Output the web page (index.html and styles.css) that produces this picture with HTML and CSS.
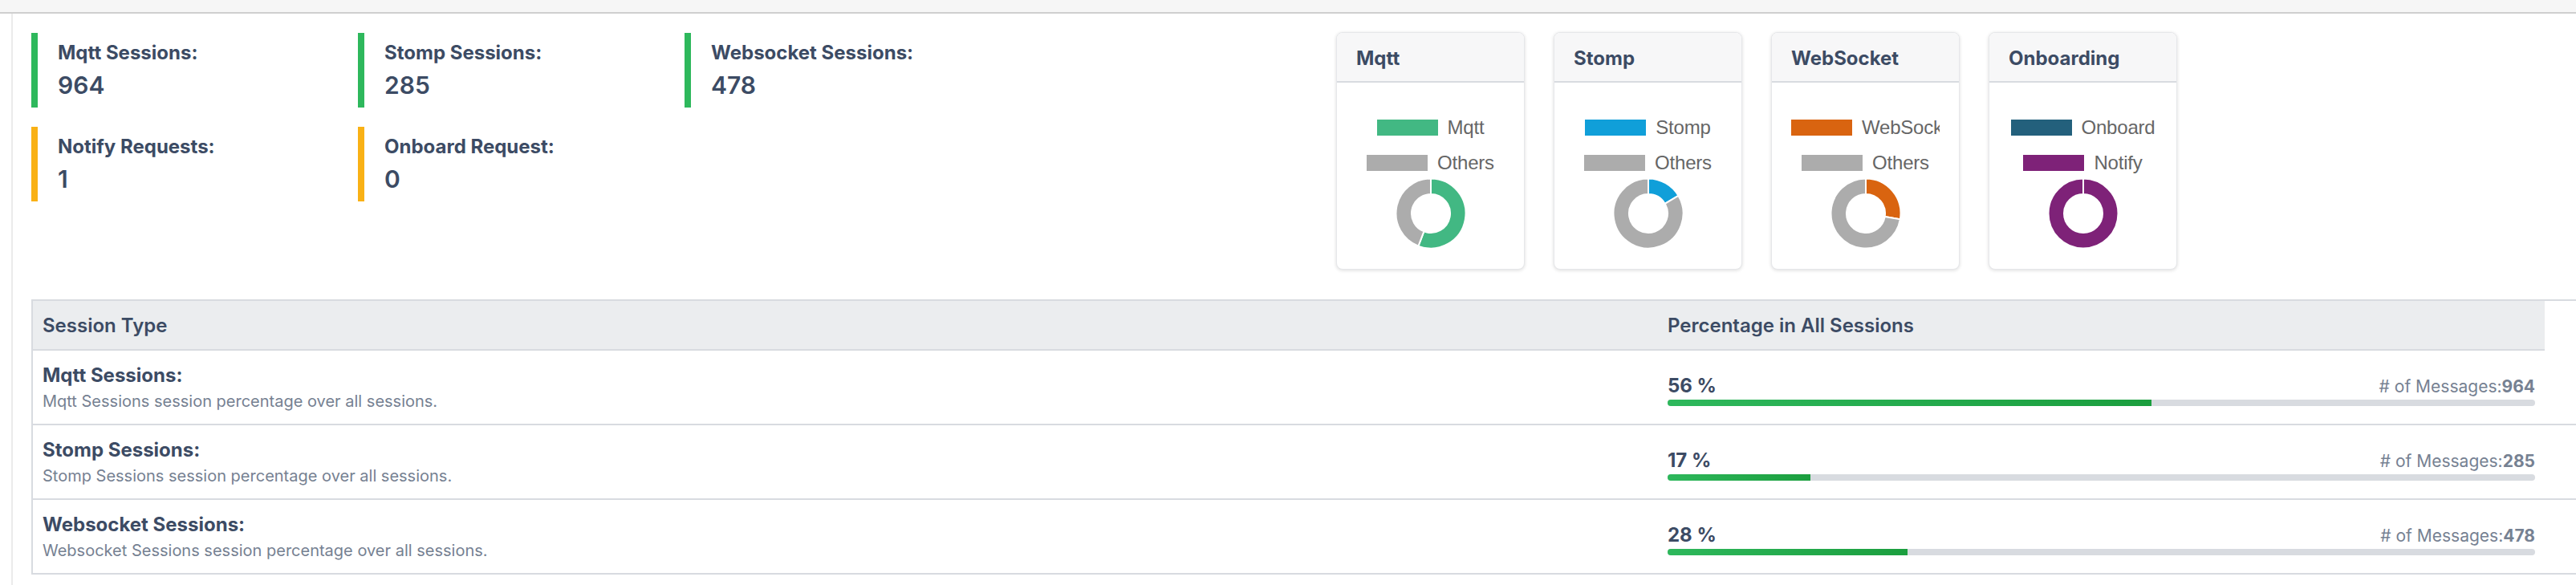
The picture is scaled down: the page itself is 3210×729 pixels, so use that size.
FILE: index.html
```html
<!DOCTYPE html>
<html lang="en">
<head>
<meta charset="utf-8">
<title>Sessions Dashboard</title>
<link rel="stylesheet" href="styles.css">
</head>
<body>
<div class="topbar"></div>
<div class="layout">
  <aside class="rail"></aside>
  <main class="content">
    <section class="overview">
      <div class="stats">
        <div class="stat"><div class="stat-label">Mqtt Sessions:</div><div class="stat-value">964</div></div>
        <div class="stat"><div class="stat-label">Stomp Sessions:</div><div class="stat-value">285</div></div>
        <div class="stat"><div class="stat-label">Websocket Sessions:</div><div class="stat-value">478</div></div>
        <div class="stat warning"><div class="stat-label">Notify Requests:</div><div class="stat-value">1</div></div>
        <div class="stat warning"><div class="stat-label">Onboard Request:</div><div class="stat-value">0</div></div>
      </div>
      <div class="charts">
        <div class="chart-card">
          <div class="chart-head">Mqtt</div>
          <div class="chart-body">
            <div class="legend">
              <div class="legend-row"><span class="legend-item"><span class="swatch c-mqtt"></span>Mqtt</span></div>
              <div class="legend-row"><span class="legend-item"><span class="swatch c-other"></span>Others</span></div>
            </div>
            <svg class="donut" viewBox="-44 -44 88 88">
              <path class="seg s-mqtt" d="M0,-43.5 A43.5,43.5 0 1 1 -15.553,40.625 L-8.581,22.414 A24,24 0 1 0 0,-24 Z"/>
              <path class="seg s-other" d="M-15.553,40.625 A43.5,43.5 0 0 1 0,-43.5 L0,-24 A24,24 0 0 0 -8.581,22.414 Z"/>
            </svg>
          </div>
        </div>
        <div class="chart-card">
          <div class="chart-head">Stomp</div>
          <div class="chart-body">
            <div class="legend">
              <div class="legend-row"><span class="legend-item"><span class="swatch c-stomp"></span>Stomp</span></div>
              <div class="legend-row"><span class="legend-item"><span class="swatch c-other"></span>Others</span></div>
            </div>
            <svg class="donut" viewBox="-44 -44 88 88">
              <path class="seg s-stomp" d="M0,-43.5 A43.5,43.5 0 0 1 37.447,-22.136 L20.661,-12.213 A24,24 0 0 0 0,-24 Z"/>
              <path class="seg s-other" d="M37.447,-22.136 A43.5,43.5 0 1 1 0,-43.5 L0,-24 A24,24 0 1 0 20.661,-12.213 Z"/>
            </svg>
          </div>
        </div>
        <div class="chart-card">
          <div class="chart-head">WebSocket</div>
          <div class="chart-body">
            <div class="legend">
              <div class="legend-row"><span class="legend-item"><span class="swatch c-ws"></span>WebSocket</span></div>
              <div class="legend-row"><span class="legend-item"><span class="swatch c-other"></span>Others</span></div>
            </div>
            <svg class="donut" viewBox="-44 -44 88 88">
              <path class="seg s-ws" d="M0,-43.5 A43.5,43.5 0 0 1 42.886,7.285 L23.661,4.020 A24,24 0 0 0 0,-24 Z"/>
              <path class="seg s-other" d="M42.886,7.285 A43.5,43.5 0 1 1 0,-43.5 L0,-24 A24,24 0 1 0 23.661,4.020 Z"/>
            </svg>
          </div>
        </div>
        <div class="chart-card">
          <div class="chart-head">Onboarding</div>
          <div class="chart-body">
            <div class="legend">
              <div class="legend-row"><span class="legend-item"><span class="swatch c-onboard"></span>Onboard</span></div>
              <div class="legend-row"><span class="legend-item"><span class="swatch c-notify"></span>Notify</span></div>
            </div>
            <svg class="donut" viewBox="-44 -44 88 88">
              <path class="seg s-notify" d="M0,-43.5 A43.5,43.5 0 1 1 0,43.5 A43.5,43.5 0 1 1 0,-43.5 L0,-24 A24,24 0 1 0 0,24 A24,24 0 1 0 0,-24 Z"/>
            </svg>
          </div>
        </div>
      </div>
    </section>

    <section class="sessions">
      <div class="row head">
        <div class="cell">Session Type</div>
        <div class="cell">Percentage in All Sessions</div>
        <div class="cell spacer"></div>
      </div>
      <div class="row">
        <div class="type">
          <div class="type-title">Mqtt Sessions:</div>
          <div class="type-desc">Mqtt Sessions session percentage over all sessions.</div>
        </div>
        <div class="share">
          <div class="share-top"><span class="pct">56 %</span><span class="msgs"># of Messages:<b>964</b></span></div>
          <div class="track"><div class="fill" style="width:55.82%"></div></div>
        </div>
        <div></div>
      </div>
      <div class="row">
        <div class="type">
          <div class="type-title">Stomp Sessions:</div>
          <div class="type-desc">Stomp Sessions session percentage over all sessions.</div>
        </div>
        <div class="share">
          <div class="share-top"><span class="pct">17 %</span><span class="msgs"># of Messages:<b>285</b></span></div>
          <div class="track"><div class="fill" style="width:16.5%"></div></div>
        </div>
        <div></div>
      </div>
      <div class="row">
        <div class="type">
          <div class="type-title">Websocket Sessions:</div>
          <div class="type-desc">Websocket Sessions session percentage over all sessions.</div>
        </div>
        <div class="share">
          <div class="share-top"><span class="pct">28 %</span><span class="msgs"># of Messages:<b>478</b></span></div>
          <div class="track"><div class="fill" style="width:27.68%"></div></div>
        </div>
        <div></div>
      </div>
    </section>
  </main>
</div>
</body>
</html>
```

FILE: styles.css
```css
* { box-sizing: border-box; }
html, body { margin: 0; padding: 0; }
body {
  width: 3210px;
  height: 729px;
  overflow: hidden;
  background: #fff;
  font-family: Inter, "Noto Sans", sans-serif;
  color: #3c4b64;
}
.topbar {
  height: 17px;
  background: #f6f6f6;
  border-bottom: 2px solid #cfcfcf;
}
.layout { display: flex; height: 712px; }
.rail { flex: 0 0 16px; border-right: 2px solid #ebebeb; }
.content { flex: 1; min-width: 0; padding: 24px 0 0 23px; }

.overview { display: flex; align-items: flex-start; }
.stats {
  flex: 0 0 1626px;
  display: grid;
  grid-template-columns: repeat(3, 407px);
  row-gap: 24px;
  align-content: start;
}
.stat {
  height: 93px;
  border-left: 8px solid #2eb85c;
  padding: 10px 0 0 25px;
}
.stat.warning { border-left-color: #f9b115; }
.stat-label { font-size: 24px; font-weight: 700; line-height: 29px; margin-bottom: 8px; }
.stat-value { font-size: 30px; font-weight: 600; line-height: 36px; }

.charts { display: flex; gap: 36px; margin-top: -1px; }
.chart-card {
  width: 235px;
  background: #fff;
  border: 1px solid #e6e7ea;
  border-radius: 8px;
  box-shadow: 0 1px 4px rgba(0, 0, 0, 0.14);
  overflow: hidden;
}
.chart-head {
  background: #f7f7f8;
  border-bottom: 2px solid #d8dbe0;
  padding: 17px 24px 14px;
  font-size: 24px;
  font-weight: 700;
  line-height: 29px;
}
.chart-body { padding: 34px 0 25px; }
.legend { margin: 0 24px; overflow: hidden; text-align: center; white-space: nowrap; }
.legend-row { height: 44px; line-height: 44px; }
.legend-item {
  display: inline-flex;
  align-items: center;
  gap: 12px;
  height: 44px;
  vertical-align: top;
  font-family: "Liberation Sans", Arial, sans-serif;
  font-size: 24px;
  letter-spacing: -0.2px;
  color: #666;
}
.swatch { flex: none; width: 76px; height: 20px; }
.c-mqtt { background: #42b883; }
.c-stomp { background: #109fd9; }
.c-ws { background: #d96410; }
.c-onboard { background: #23607c; }
.c-notify { background: #7e2278; }
.c-other { background: #acacac; }
.donut { display: block; width: 88px; height: 88px; margin: -3px auto 0; }
.seg { stroke: #fff; stroke-width: 2; }
.s-mqtt { fill: #42b883; }
.s-stomp { fill: #109fd9; }
.s-ws { fill: #d96410; }
.s-notify { fill: #7e2278; }
.s-other { fill: #acacac; }

.sessions {
  margin-top: 37px;
  border-top: 2px solid #d8dbe0;
  border-left: 2px solid #d8dbe0;
}
.row {
  display: grid;
  grid-template-columns: 2025px 1105px 1fr;
  border-bottom: 2px solid #d8dbe0;
}
.row.head { border-bottom: 0; }
.row.head > .cell {
  background: #ebedef;
  border-bottom: 2px solid #d8dbe0;
  padding: 16px 12px 15px;
  font-size: 24px;
  font-weight: 600;
  line-height: 29px;
}
.row.head > .cell.spacer { background: transparent; border-bottom-color: transparent; }
.type { padding: 16px 12px; }
.type-title { font-size: 24px; font-weight: 700; line-height: 29px; margin-bottom: 6px; }
.type-desc { font-size: 20px; line-height: 24px; color: #768192; }
.share { padding: 29px 12px 0; }
.share-top {
  display: flex;
  justify-content: space-between;
  align-items: baseline;
  line-height: 29px;
  margin-bottom: 2px;
}
.pct { font-size: 24px; font-weight: 700; }
.msgs { font-size: 21px; color: #768192; }
.msgs b { font-weight: 700; }
.track { height: 8px; border-radius: 4px; background: #d8dbe0; overflow: hidden; }
.fill { height: 100%; background: linear-gradient(45deg, #2eb85c, #1b9e3e); }
```
